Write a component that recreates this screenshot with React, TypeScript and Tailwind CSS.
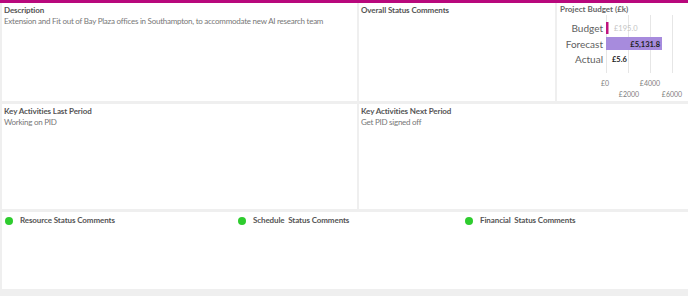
const statuses = [
  { label: "Resource Status Comments", w: "w-[233px]" },
  { label: "Schedule\u00a0 Status Comments", w: "w-[227px]" },
  { label: "Financial\u00a0 Status Comments", w: "" },
];

function BudgetChart() {
  const grid = [49, 71, 93, 115];
  return (
    <svg width="130" height="86" className="block">
      {grid.map((x) => (
        <line key={x} x1={x + 0.5} x2={x + 0.5} y1={-3} y2={58} stroke="#e6e6e6" strokeWidth={1} />
      ))}
      <rect x={49} y={7} width={2.5} height={12} fill="#c0147e" />
      <rect x={49} y={22} width={56} height={13} fill="#a78bdd" />
      <text x={46} y={17} textAnchor="end" fontSize={10} fill="#606060">Budget</text>
      <text x={46} y={32.5} textAnchor="end" fontSize={10} fill="#606060">Forecast</text>
      <text x={46} y={48} textAnchor="end" fontSize={10} fill="#606060">Actual</text>
      <text x={57} y={16} fontSize={7.5} fill="#c4c4c4">£195.0</text>
      <text x={103} y={31.5} textAnchor="end" fontSize={7.5} fontWeight="bold" fill="#222">£5,131.8</text>
      <text x={55} y={47} fontSize={7.5} fontWeight="bold" fill="#222">£5.6</text>
      <text x={48} y={71} textAnchor="middle" fontSize={7} fill="#808080">£0</text>
      <text x={93} y={71} textAnchor="middle" fontSize={7} fill="#808080">£4000</text>
      <text x={72} y={82} textAnchor="middle" fontSize={7} fill="#808080">£2000</text>
      <text x={115} y={82} textAnchor="middle" fontSize={7} fill="#808080">£6000</text>
    </svg>
  );
}

export default function App() {
  return (
    <div className="w-[698px] h-[296px] bg-white overflow-hidden" style={{ fontFamily: "Lato, 'Liberation Sans', sans-serif" }}>
      <div className="w-[688px] h-[296px] bg-[#efefef] flex flex-col">
        {/* Top accent bar */}
        <div className="h-[3px] bg-[#b8087c] shrink-0" />

        {/* Row 1 */}
        <div className="flex gap-[2px] pl-[2px] h-[98px] shrink-0">
          <div className="w-[355px] bg-white px-[2px] pt-[2px]">
            <div className="text-[8px] font-bold text-[#555] leading-[11px] tracking-[-0.1px]">Description</div>
            <div className="text-[8px] text-[#777] leading-[11px] tracking-[-0.25px]">
              Extension and Fit out of Bay Plaza offices in Southampton, to accommodate new AI research team
            </div>
          </div>
          <div className="w-[196px] bg-white px-[2px] pt-[2px]">
            <div className="text-[8px] font-bold text-[#555] leading-[11px] tracking-[-0.1px]">Overall Status Comments</div>
          </div>
          <div className="flex-1 bg-white flex flex-col">
            <div className="text-[8px] font-bold text-[#666] leading-[11px] pl-[3px] pt-[1px] h-[12px]">
              Project Budget (£k)
            </div>
            <BudgetChart />
          </div>
        </div>

        {/* Row 2 */}
        <div className="flex gap-[2px] pl-[2px] mt-[3px] h-[105px] shrink-0">
          <div className="w-[355px] bg-white px-[2px] pt-[2px]">
            <div className="text-[8px] font-bold text-[#555] leading-[11px] tracking-[-0.1px]">Key Activities Last Period</div>
            <div className="text-[8px] text-[#777] leading-[11px] tracking-[-0.25px]">Working on PID</div>
          </div>
          <div className="flex-1 bg-white px-[2px] pt-[2px]">
            <div className="text-[8px] font-bold text-[#555] leading-[11px] tracking-[-0.1px]">Key Activities Next Period</div>
            <div className="text-[8px] text-[#777] leading-[11px] tracking-[-0.25px]">Get PID signed off</div>
          </div>
        </div>

        {/* Row 3 */}
        <div className="flex pl-[2px] mt-[3px] h-[77px] shrink-0">
          <div className="flex-1 bg-white flex items-start pt-[3px] pl-[3px]">
            {statuses.map((s) => (
              <div key={s.label} className={`flex items-center gap-[7px] ${s.w}`}>
                <span className="w-[8px] h-[8px] rounded-full bg-[#2ecc2e] shrink-0" />
                <span className="text-[8px] font-bold text-[#555] leading-[11px] tracking-[-0.1px] whitespace-pre">{s.label}</span>
              </div>
            ))}
          </div>
        </div>
      </div>
    </div>
  );
}
